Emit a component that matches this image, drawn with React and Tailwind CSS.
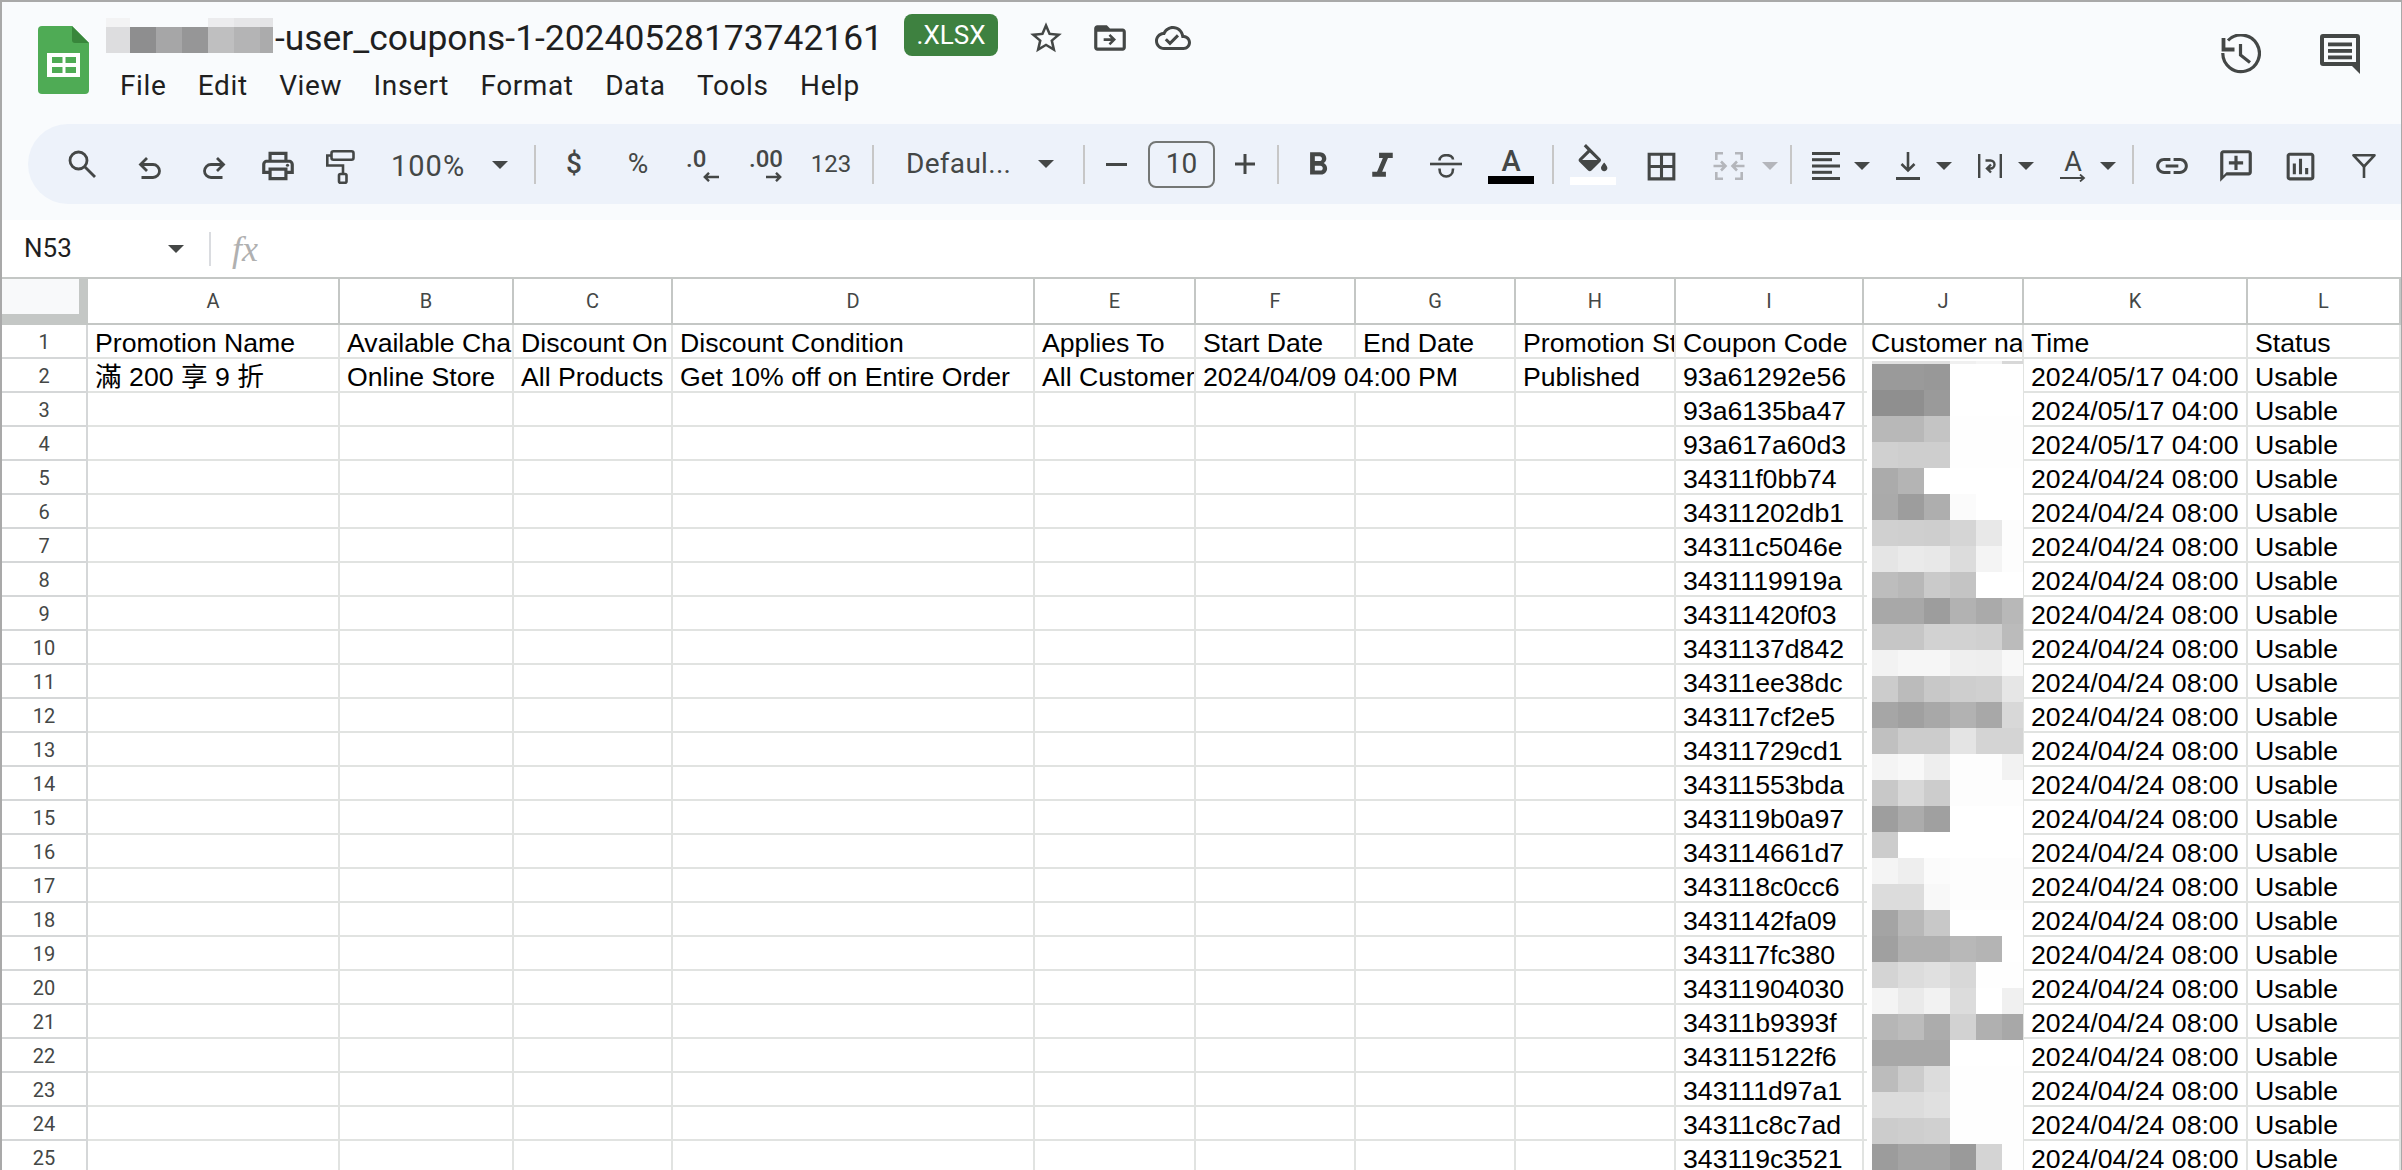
import React from 'react';

const cols = 'grid grid-cols-[86px_252px_174px_159px_362px_161px_160px_160px_160px_188px_160px_224px_153px]';
const letters = ['A', 'B', 'C', 'D', 'E', 'F', 'G', 'H', 'I', 'J', 'K', 'L'];

const rows = [
  ['93a61292e56', '2024/05/17 04:00'],
  ['93a6135ba47', '2024/05/17 04:00'],
  ['93a617a60d3', '2024/05/17 04:00'],
  ['34311f0bb74', '2024/04/24 08:00'],
  ['34311202db1', '2024/04/24 08:00'],
  ['34311c5046e', '2024/04/24 08:00'],
  ['3431119919a', '2024/04/24 08:00'],
  ['34311420f03', '2024/04/24 08:00'],
  ['3431137d842', '2024/04/24 08:00'],
  ['34311ee38dc', '2024/04/24 08:00'],
  ['343117cf2e5', '2024/04/24 08:00'],
  ['34311729cd1', '2024/04/24 08:00'],
  ['34311553bda', '2024/04/24 08:00'],
  ['343119b0a97', '2024/04/24 08:00'],
  ['343114661d7', '2024/04/24 08:00'],
  ['343118c0cc6', '2024/04/24 08:00'],
  ['3431142fa09', '2024/04/24 08:00'],
  ['343117fc380', '2024/04/24 08:00'],
  ['34311904030', '2024/04/24 08:00'],
  ['34311b9393f', '2024/04/24 08:00'],
  ['343115122f6', '2024/04/24 08:00'],
  ['343111d97a1', '2024/04/24 08:00'],
  ['34311c8c7ad', '2024/04/24 08:00'],
  ['343119c3521', '2024/04/24 08:00'],
];

// blurred customer names, one row of grey values per 26px band
const mosaic = [
  ['9a', '9a', '98', 'ff', 'ff', 'ff'],
  ['8f', '8f', '9a', 'ff', 'ff', 'ff'],
  ['b8', 'b8', 'c4', 'fe', 'fe', 'fe'],
  ['d0', 'ce', 'ce', 'fe', 'fe', 'fe'],
  ['ab', 'b4', 'ff', 'ff', 'ff', 'ff'],
  ['aa', '9d', 'ae', 'fb', 'ff', 'ff'],
  ['d0', 'cf', 'ce', 'd5', 'e8', 'fd'],
  ['e5', 'ea', 'e8', 'dc', 'f4', 'fd'],
  ['bd', 'b8', 'ca', 'c4', 'ff', 'ff'],
  ['a8', 'a8', '9d', 'b2', 'aa', 'b8'],
  ['c6', 'c6', 'd2', 'd2', 'd0', 'bb'],
  ['f2', 'f6', 'f6', 'ef', 'ee', 'f8'],
  ['cc', 'bb', 'c8', 'ce', 'd0', 'e6'],
  ['a6', 'a0', 'a8', 'b2', 'a8', 'd8'],
  ['c0', 'cc', 'cc', 'e4', 'd4', 'd4'],
  ['f4', 'f8', 'ee', 'fd', 'fd', 'f2'],
  ['c8', 'd8', 'cc', 'fd', 'fd', 'fd'],
  ['9e', 'ac', 'a0', 'ff', 'ff', 'ff'],
  ['cc', 'ff', 'ff', 'ff', 'ff', 'ff'],
  ['f4', 'ee', 'fb', 'fd', 'fd', 'fd'],
  ['dc', 'dc', 'f8', 'fd', 'fd', 'fd'],
  ['a4', 'b8', 'c8', 'ff', 'ff', 'ff'],
  ['a0', 'b0', 'b0', 'b8', 'b4', 'ff'],
  ['d4', 'dc', 'e0', 'd8', 'fe', 'fe'],
  ['f4', 'ea', 'f2', 'dc', 'ff', 'f0'],
  ['b6', 'bc', 'ac', 'd2', 'b0', 'a8'],
  ['a8', 'a8', 'a8', 'ff', 'ff', 'ff'],
  ['bc', 'cc', 'dc', 'fe', 'fe', 'fe'],
  ['dc', 'dc', 'e0', 'fe', 'fe', 'fe'],
  ['cc', 'ce', 'd0', 'fe', 'fe', 'fe'],
  ['9c', 'a4', 'a4', '9a', 'd4', 'fe'],
];

const gray = (v) => `#${v}${v}${v}`;

const ink = '#444746';

const Sep = ({ className }) => <div className={`w-[2px] h-[39px] shrink-0 bg-[#c7c7c7] ${className}`} />;

const Caret = ({ className, color = ink }) => (
  <svg viewBox="0 0 16 8" preserveAspectRatio="none" className={`h-[8px] shrink-0 ${className}`}>
    <polygon points="0,0 16,0 8,8" fill={color} />
  </svg>
);

const Slot = ({ className, children }) => (
  <div className={`flex shrink-0 items-center justify-center ${className}`}>{children}</div>
);

const Mat = ({ d, className, box = '0 0 24 24', none }) => (
  <svg viewBox={box} preserveAspectRatio={none ? 'none' : undefined} className={className} fill={ink}>
    <path d={d} />
  </svg>
);

const SheetsLogo = () => (
  <svg viewBox="0 0 51 68" className="w-[51px] h-[68px] shrink-0">
    <path d="M4 0H34L51 17V64a4 4 0 0 1-4 4H4a4 4 0 0 1-4-4V4a4 4 0 0 1 4-4z" fill="#4fab55" />
    <path d="M34 0L51 17H37a3 3 0 0 1-3-3z" fill="#38863b" />
    <path
      fillRule="evenodd"
      fill="#fff"
      d="M9 27H42V51H9zM14 31V37H24.500V31zM27.500 31V37H38V31zM14 41V47H24.500V41zM27.500 41V47H38V41z"
    />
  </svg>
);

const Cell = ({ children, className = '' }) => (
  <div
    className={`h-[34px] overflow-hidden whitespace-nowrap border-r-2 border-b-2 border-[#e1e3e1] pl-[7px] pt-[1.5px] text-[26.67px] leading-[33px] text-black ${className}`}
  >
    {children}
  </div>
);

const Row = ({ num, a, b, c, d, e, f, g, span, h, i, j, k, l }) => (
  <div className={cols}>
    <div className="h-[34px] border-r-2 border-b-2 border-[#d5d7d8] pt-[1px] text-center font-['Roboto',sans-serif] text-[20px] leading-[32px] text-[#444746]">
      {num}
    </div>
    <Cell>{a}</Cell>
    <Cell>{b}</Cell>
    <Cell>{c}</Cell>
    <Cell>{d}</Cell>
    <Cell>{e}</Cell>
    {span ? (
      <Cell className="col-span-2">{span}</Cell>
    ) : (
      <>
        <Cell>{f}</Cell>
        <Cell>{g}</Cell>
      </>
    )}
    <Cell>{h}</Cell>
    <Cell>{i}</Cell>
    <Cell>{j}</Cell>
    <Cell>{k}</Cell>
    <Cell>{l}</Cell>
  </div>
);

const Toolbar = () => (
  <div className="ml-[26px] flex h-[80px] items-center rounded-l-[40px] bg-[#edf2fa] font-['Roboto',sans-serif] text-[#444746]">
    <Slot className="ml-[22px] w-[64px]">
      <svg viewBox="0 0 28 28" className="w-[28px] h-[28px]" fill="none" stroke={ink} strokeWidth="2.8">
        <circle cx="10.500" cy="10.500" r="8.500" />
        <path d="M16.500 16.500L27 27" />
      </svg>
    </Slot>
    <Slot className="ml-[4px] w-[64px] mt-[7px]">
      <svg viewBox="0 0 24 22" className="w-[24px] h-[22px]" fill="none" stroke={ink} strokeWidth="2.8">
        <path d="M9 1L2.500 7.500L9 14M2.500 7.500H15a5.500 5.500 0 0 1 0 13H3.500" />
      </svg>
    </Slot>
    <Slot className="w-[64px] mt-[7px]">
      <svg viewBox="0 0 24 22" className="w-[24px] h-[22px] -scale-x-100" fill="none" stroke={ink} strokeWidth="2.8">
        <path d="M9 1L2.500 7.500L9 14M2.500 7.500H15a5.500 5.500 0 0 1 0 13H3.500" />
      </svg>
    </Slot>
    <Slot className="w-[64px] mt-[4px]">
      <svg viewBox="0 0 24 24" className="w-[38px] h-[38px]" fill={ink}>
        <path d="M19 8h-1V3H6v5H5c-1.660 0-3 1.340-3 3v6h4v4h12v-4h4v-6c0-1.660-1.340-3-3-3zM8 5h8v3H8V5zm8 12v2H8v-4h8v2zm2-2v-2H6v2H4v-4c0-.55.45-1 1-1h14c.55 0 1 .45 1 1v4h-2z" />
        <circle cx="18" cy="11.500" r="1" />
      </svg>
    </Slot>
    <Slot className="w-[60px] mt-[5px]">
      <svg viewBox="0 0 29 34" className="w-[29px] h-[34px]" fill="none" stroke={ink} strokeWidth="2.600">
        <rect x="5.500" y="1.300" width="22" height="8.500" rx="2" />
        <path d="M5.500 5.500H1.300V15.500H17V23" />
        <rect x="13" y="24" width="7.500" height="8.700" rx="1.500" />
      </svg>
    </Slot>
    <div className="ml-[21px] mt-[4px] w-[74px] shrink-0 text-[29px] tracking-[1px] leading-[36px]">100%</div>
    <Caret className="ml-[27px] w-[16px] mt-[2px]" />
    <Sep className="ml-[26px]" />
    <Slot className="ml-[6px] w-[64px] text-[28px] font-medium">$</Slot>
    <Slot className="w-[64px] text-[28px]">%</Slot>
    <Slot className="w-[64px] h-[40px] relative">
      <span className="absolute left-[16px] top-[0px] text-[24px] font-medium leading-[30px]">.0</span>
      <svg viewBox="0 0 16 10" className="absolute left-[33px] top-[28px] w-[16px] h-[10px]" fill="none" stroke={ink} strokeWidth="2.400">
        <path d="M16 5H2M6 .8L1.800 5L6 9.200" />
      </svg>
    </Slot>
    <Slot className="w-[64px] h-[40px] relative">
      <span className="absolute left-[15px] top-[0px] text-[24px] font-medium leading-[30px]">.00</span>
      <svg viewBox="0 0 16 10" className="absolute left-[32px] top-[28px] w-[16px] h-[10px] -scale-x-100" fill="none" stroke={ink} strokeWidth="2.400">
        <path d="M16 5H2M6 .8L1.800 5L6 9.200" />
      </svg>
    </Slot>
    <Slot className="w-[66px] text-[24px]">123</Slot>
    <Sep className="ml-[8px]" />
    <div className="ml-[32px] w-[104px] shrink-0 text-[28px] tracking-[0.3px] leading-[36px]">Defaul...</div>
    <Caret className="ml-[28px] w-[16px]" />
    <Sep className="ml-[29px]" />
    <Slot className="ml-[6px] w-[50px]">
      <div className="h-[3px] w-[21px] bg-[#444746]" />
    </Slot>
    <div className="ml-[7px] flex h-[47px] w-[67px] shrink-0 items-center justify-center rounded-[8px] border-2 border-[#747775] text-[28px]">
      10
    </div>
    <Slot className="ml-[3px] w-[54px]">
      <svg viewBox="0 0 20 20" className="w-[20px] h-[20px]" fill={ink}>
        <path d="M8.500 0h3v8.500H20v3h-8.500V20h-3v-8.500H0v-3h8.500z" />
      </svg>
    </Slot>
    <Sep className="ml-[5px]" />
    <Slot className="ml-[7px] w-[64px] mt-[2px]">
      <Mat className="w-[38px] h-[38px]" d="M15.600 10.790c.97-.67 1.650-1.770 1.650-2.790 0-2.260-1.750-4-4-4H7v14h7.040c2.090 0 3.710-1.700 3.710-3.790 0-1.520-.86-2.820-2.150-3.420zM10 6.500h3c.83 0 1.500.67 1.500 1.500s-.67 1.500-1.500 1.500h-3v-3zm3.500 9H10v-3h3.500c.83 0 1.500.67 1.500 1.500s-.67 1.500-1.500 1.500z" />
    </Slot>
    <Slot className="w-[64px] mt-[4px]">
      <Mat className="w-[41px] h-[41px]" d="M10 4v3h2.210l-3.420 8H6v3h8v-3h-2.210l3.420-8H18V4z" />
    </Slot>
    <Slot className="w-[64px] mt-[4px]">
      <svg viewBox="0 0 32 24" className="w-[32px] h-[24px]" fill="none" stroke={ink} strokeWidth="2.600">
        <path d="M0 10H32" />
        <path d="M9.500 6.500C9.500 -.5 23 -.5 23 5.500M9.500 14.500V15C9.500 25 23 25 23 15V14.500" />
      </svg>
    </Slot>
    <div className="flex w-[66px] shrink-0 flex-col items-center mt-[7px]">
      <div className="h-[21px] text-[29px] font-medium leading-[21px]">A</div>
      <div className="mt-[4px] h-[8px] w-[46px] bg-black" />
    </div>
    <Sep className="ml-[8px]" />
    <div className="ml-[7px] flex w-[64px] shrink-0 flex-col items-center">
      <Mat
        box="2 0 20 18"
        className="w-[32px] h-[29px]"
        d="M16.560 8.940L7.620 0 6.210 1.410l2.380 2.380-5.150 5.150c-.59.59-.59 1.540 0 2.120l5.500 5.500c.29.29.68.44 1.060.44s.77-.15 1.060-.44l5.500-5.500c.59-.58.59-1.530 0-2.120zM5.210 10L10 5.210 14.790 10H5.210zM19 11.500s-2 2.170-2 3.500c0 1.100.9 2 2 2s2-.9 2-2c0-1.330-2-3.500-2-3.500z"
      />
      <div className="mt-[4px] h-[8px] w-[46px] bg-white" />
    </div>
    <Slot className="w-[72px] mt-[4px]">
      <Mat className="w-[37px] h-[37px]" d="M3 3v18h18V3H3zm8 16H5v-6h6v6zm0-8H5V5h6v6zm8 8h-6v-6h6v6zm0-8h-6V5h6v6z" />
    </Slot>
    <Slot className="w-[64px] mt-[4px]">
      <svg viewBox="0 0 28 28" className="w-[28px] h-[28px] overflow-visible" fill="none" stroke="#b4b6bb" strokeWidth="2.600">
        <path d="M8 1.300H1.300V8M1.300 20V26.700H8M20 1.300H26.700V8M26.700 20V26.700H20" />
        <path d="M-1.500 14H10M6 9.500L10.500 14L6 18.500M29.500 14H18M22 9.500L17.500 14L22 18.500" />
      </svg>
    </Slot>
    <Caret className="ml-[1px] w-[16px] mt-[4px]" color="#b4b6bb" />
    <Sep className="ml-[12px]" />
    <Slot className="ml-[13px] w-[42px] mt-[4px]">
      <svg viewBox="0 0 28 28" className="w-[28px] h-[28px]" fill={ink}>
        <rect width="28" height="3" />
        <rect y="6.200" width="20" height="3" />
        <rect y="12.500" width="28" height="3" />
        <rect y="18.800" width="20" height="3" />
        <rect y="25" width="28" height="3" />
      </svg>
    </Slot>
    <Caret className="ml-[7px] w-[16px] mt-[4px]" />
    <Slot className="ml-[17px] w-[42px] mt-[4px]">
      <svg viewBox="0 0 24 28" className="w-[24px] h-[28px]" fill="none" stroke={ink} strokeWidth="2.600">
        <path d="M12 0V18M5.500 12L12 18.500L18.500 12" />
        <path d="M0 26.500H24" strokeWidth="3" />
      </svg>
    </Slot>
    <Caret className="ml-[7px] w-[16px] mt-[4px]" />
    <Slot className="ml-[17px] w-[42px] mt-[4px]">
      <svg viewBox="0 0 24 24" className="w-[24px] h-[24px]" fill="none" stroke={ink} strokeWidth="2.400">
        <path d="M1.200 0V24M22.800 0V24" />
        <path d="M7.500 6.500H12.500a4 4 0 0 1 0 8H9M13 10.500L9 14.500L13 18.500" />
      </svg>
    </Slot>
    <Caret className="ml-[7px] w-[16px] mt-[4px]" />
    <div className="ml-[18px] flex w-[42px] shrink-0 flex-col items-center mt-[4px]">
      <div className="h-[22px] text-[27px] leading-[22px]">A</div>
      <svg viewBox="0 0 26 8" className="mt-[1px] w-[26px] h-[8px]" fill="none" stroke={ink} strokeWidth="1.800">
        <path d="M0 4H24M20 .5L24 4L20 7.500" />
      </svg>
    </div>
    <Caret className="ml-[6px] w-[16px] mt-[4px]" />
    <Sep className="ml-[16px]" />
    <Slot className="ml-[8px] w-[60px] mt-[4px]">
      <Mat className="w-[38px] h-[38px]" d="M3.900 12c0-1.710 1.390-3.100 3.100-3.100h4V7H7c-2.760 0-5 2.240-5 5s2.240 5 5 5h4v-1.900H7c-1.710 0-3.100-1.390-3.100-3.100zM8 13h8v-2H8v2zm9-6h-4v1.900h4c1.710 0 3.100 1.390 3.100 3.100s-1.390 3.100-3.100 3.100h-4V17h4c2.760 0 5-2.240 5-5s-2.240-5-5-5z" />
    </Slot>
    <Slot className="w-[68px] mt-[4px]">
      <svg viewBox="0 0 24 24" className="w-[38px] h-[38px]" fill={ink}>
        <path d="M20 2H4c-1.100 0-2 .9-2 2v18l4-4h14c1.100 0 2-.9 2-2V4c0-1.100-.9-2-2-2zm0 14H6l-2 2V4h16v12z" />
        <path d="M13 5.500h-2V9H7.500v2H11v3.500h2V11h3.500V9H13z" />
      </svg>
    </Slot>
    <Slot className="w-[60px] mt-[4px]">
      <Mat className="w-[37px] h-[37px]" d="M9 17H7v-7h2v7zm4 0h-2V7h2v10zm4 0h-2v-4h2v4zm2 2H5V5h14v14zm0-16H5c-1.100 0-2 .9-2 2v14c0 1.100.9 2 2 2h14c1.100 0 2-.9 2-2V5c0-1.100-.9-2-2-2z" />
    </Slot>
    <Slot className="ml-[4px] w-[60px] mt-[4px]">
      <svg viewBox="0 0 24 24" className="w-[24px] h-[24px]" fill="none" stroke={ink} strokeWidth="2.600">
        <path d="M1.500 1.300H22.500L12 12.500Z" strokeLinejoin="round" />
        <path d="M12 12V24" />
      </svg>
    </Slot>
  </div>
);

const App = () => {
  return (
    <div className="relative h-[1170px] w-[2402px] overflow-hidden border-t-2 border-r border-l-2 border-[#a9a9a9] bg-white font-['Liberation_Sans','Noto_Sans_CJK_TC',sans-serif]">
      <div className="h-[218px] bg-[#f9fbfd]">
        <div className="flex h-[122px] font-['Roboto',sans-serif] text-[#1f1f1f]">
          <div className="ml-[36px] mt-[24px]">
            <SheetsLogo />
          </div>
          <div className="ml-[17px] flex-1">
            <div className="mt-[12px] flex h-[42px] items-center">
              <div className="flex h-[35px] w-[167px] shrink-0 flex-col">
                <div className="flex h-[9px]">
                  <div className="w-[24px] bg-[#f3f3f4]" />
                  <div className="w-[78px]" />
                  <div className="w-[26px] bg-[#ececee]" />
                  <div className="w-[26px] bg-[#e6e6e8]" />
                  <div className="w-[13px] bg-[#e4e4e6]" />
                </div>
                <div className="flex h-[26px]">
                  <div className="w-[24px] bg-[#dddddf]" />
                  <div className="w-[26px] bg-[#8e8e8f]" />
                  <div className="w-[26px] bg-[#a6a6a7]" />
                  <div className="w-[26px] bg-[#969697]" />
                  <div className="w-[26px] bg-[#bfbfc0]" />
                  <div className="w-[26px] bg-[#b4b4b5]" />
                  <div className="w-[13px] bg-[#ababac]" />
                </div>
              </div>
              <div className="ml-[2px] mt-[5px] w-[629px] shrink-0 whitespace-nowrap text-[35.4px] leading-[42px]">-user_coupons-1-20240528173742161</div>
              <div className="flex h-[42px] w-[94px] shrink-0 items-center justify-center rounded-[8px] bg-[#3e8140] text-[26px] text-white">
                .XLSX
              </div>
              <Slot className="ml-[16px] w-[64px] mt-[5px]">
                <Mat className="w-[38px] h-[38px]" d="M22 9.240l-7.190-.62L12 2 9.190 8.630 2 9.240l5.460 4.730L5.820 21 12 17.270 18.180 21l-1.630-7.030L22 9.240zM12 15.400l-3.760 2.270 1-4.280-3.320-2.880 4.380-.38L12 6.100l1.710 4.040 4.380.38-3.320 2.880 1 4.280L12 15.400z" />
              </Slot>
              <Slot className="w-[64px] mt-[5px]">
                <svg viewBox="0 0 24 24" className="w-[38px] h-[38px]" fill={ink}>
                  <path d="M20 6h-8l-2-2H4c-1.110 0-1.990.89-1.990 2L2 18c0 1.110.89 2 2 2h16c1.110 0 2-.89 2-2V8c0-1.110-.89-2-2-2zm0 12H4V8h16v10z" />
                  <path d="M12.200 9.500l-1.100 1.100 1.500 1.500H8v1.800h4.600l-1.500 1.500 1.100 1.100 3.600-3.500z" />
                </svg>
              </Slot>
              <Slot className="w-[62px] mt-[5px]">
                <Mat className="w-[36px] h-[36px]" d="M19.350 10.040C18.670 6.590 15.640 4 12 4 9.110 4 6.600 5.640 5.350 8.040 2.340 8.360 0 10.910 0 14c0 3.310 2.690 6 6 6h13c2.760 0 5-2.240 5-5 0-2.640-2.050-4.780-4.650-4.960zM19 18H6c-2.210 0-4-1.790-4-4 0-2.050 1.530-3.760 3.560-3.970l1.070-.11.5-.95C8.080 7.140 9.940 6 12 6c2.620 0 4.880 1.860 5.390 4.430l.3 1.500 1.530.11c1.560.1 2.780 1.410 2.780 2.960 0 1.650-1.350 3-3 3zm-9-3.820l-2.090-2.090L6.500 13.500 10 17l6.010-6.010-1.410-1.410z" />
              </Slot>
            </div>
            <div className="ml-[14px] mt-[12px] flex gap-[31.5px] text-[28px] tracking-[0.6px] leading-[36px]">
              <span>File</span>
              <span>Edit</span>
              <span>View</span>
              <span>Insert</span>
              <span>Format</span>
              <span>Data</span>
              <span>Tools</span>
              <span>Help</span>
            </div>
          </div>
          <div className="mr-[41px] mt-[32px] flex h-[40px] gap-[59px]">
            <svg viewBox="0 0 40 40" className="w-[40px] h-[40px]" fill="none" stroke={ink} strokeWidth="3.200">
              <path d="M7 6.500A18.300 18.300 0 1 1 1.800 19" />
              <path d="M2.500 4V15.500H13.500" strokeWidth="3.800" />
              <path d="M19.500 10V21L29 28.500" />
            </svg>
            <svg viewBox="0 0 40 40" className="w-[40px] h-[40px]" fill={ink}>
              <path fillRule="evenodd" d="M3 0H37a3 3 0 0 1 3 3V40L32 32H3a3 3 0 0 1-3-3V3a3 3 0 0 1 3-3zM4 4V28H36V4z" />
              <rect x="8" y="8.500" width="24" height="3.800" />
              <rect x="8" y="15" width="24" height="3.800" />
              <rect x="8" y="21.500" width="24" height="3.800" />
            </svg>
          </div>
        </div>
        <Toolbar />
      </div>

      <div className="flex h-[57px] items-center font-['Roboto',sans-serif]">
        <div className="ml-[22px] w-[144px] shrink-0 text-[26px] text-[#1f1f1f]">N53</div>
        <Caret className="w-[16px]" />
        <div className="ml-[25px] h-[34px] w-[2px] bg-[#dadce0]" />
        <div className="ml-[21px] font-['Liberation_Serif',serif] text-[36px] italic leading-[34px] text-[#b0b0b0]">fx</div>
      </div>

      <div className={`${cols} h-[48px] border-t-2 border-b-2 border-[#c4c7c5]`}>
        <div className="border-r-[9px] border-b-[9px] border-[#c4c7c5] bg-[#f8f9fa]" />
        {letters.map((letter) => (
          <div
            key={letter}
            className="flex items-center justify-center border-r-2 border-[#c4c7c5] font-['Roboto',sans-serif] text-[20px] text-[#444746]"
          >
            {letter}
          </div>
        ))}
      </div>

      <Row
        num={1}
        a="Promotion Name"
        b="Available Channels"
        c="Discount On"
        d="Discount Condition"
        e="Applies To"
        f="Start Date"
        g="End Date"
        h="Promotion Status"
        i="Coupon Code"
        j="Customer name"
        k="Time"
        l="Status"
      />
      <Row
        num={2}
        a="滿 200 享 9 折"
        b="Online Store"
        c="All Products"
        d="Get 10% off on Entire Order"
        e="All Customers"
        span="2024/04/09 04:00 PM"
        h="Published"
        i={rows[0][0]}
        k={rows[0][1]}
        l="Usable"
      />
      {rows.slice(1).map((r, idx) => (
        <Row key={r[0]} num={idx + 3} i={r[0]} k={r[1]} l="Usable" />
      ))}

      {/* pixelated block that hides the customer names */}
      <div className="absolute top-[359px] left-[1865px] w-[156px] overflow-hidden bg-[#fefefe] pl-[5px]">
        <div className="flex h-[3px]">
          {['e0', 'e0', 'e0', 'f0', 'f5', 'd8'].map((v, n) => (
            <div key={n} className="w-[26px] shrink-0" style={{ backgroundColor: gray(v) }} />
          ))}
        </div>
        {mosaic.map((band, y) => (
          <div key={y} className="flex h-[26px]">
            {band.map((v, x) => (
              <div key={x} className="w-[26px] shrink-0" style={{ backgroundColor: gray(v) }} />
            ))}
          </div>
        ))}
      </div>
    </div>
  );
};

export default App;
